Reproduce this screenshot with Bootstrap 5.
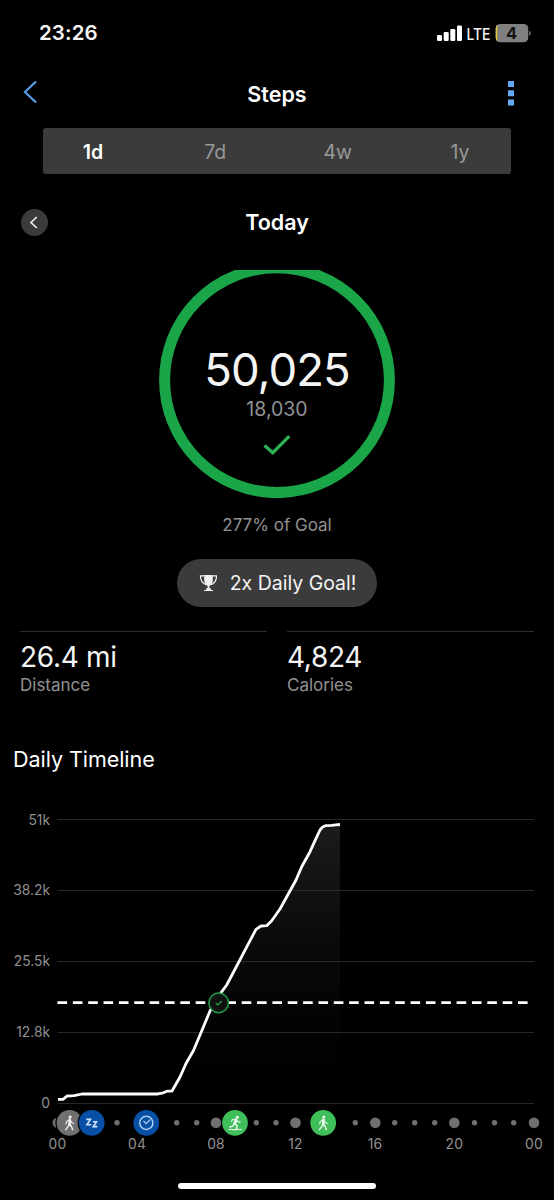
<!DOCTYPE html>
<html lang="en" data-bs-theme="dark">
<head>
<meta charset="utf-8">
<meta name="viewport" content="width=device-width, initial-scale=1">
<title>Steps</title>
<link href="https://cdn.jsdelivr.net/npm/bootstrap@5.3.0/dist/css/bootstrap.min.css" rel="stylesheet">
<style>
  body { background: #000; color: #f4f4f4; font-family: Inter, "Liberation Sans", sans-serif; overflow: hidden; }
  .screen { width: 554px; height: 1200px; }
  svg { display: block; flex: none; }
  .muted { color: #929292; }
  .statusbar { height: 66px; padding: 0 22px 0 39px; }
  .clock { font-size: 20.5px; font-weight: 600; letter-spacing: .1px; padding-top: 1px; }
  .topbar { height: 62px; padding: 0 40px 6px 23px; }
  .topbar .back { margin-top: -4px; }
  .heading { font-size: 21.5px; font-weight: 600; line-height: 28px; }
  .side { width: 45px; }
  .side.end { width: 28px; }
  .segments { height: 46px; margin: 0 43px; padding: 3px 21px 0 20px; background: #3b3b3b; border-radius: 3px; }
  .segments .btn { width: 60px; padding: 0; border: 0; font-size: 19.5px; color: #989898; }
  .segments .btn.active { color: #fff; font-weight: 600; background: none; }
  .dayrow { height: 96px; padding: 0 48px 0 21px; }
  .round-btn { width: 27px; height: 27px; background: #3b3b3b; }
  .ring-wrap { height: 228px; }
  .ring-text { inset: 0; padding-top: 73px; }
  .total { font-size: 45.5px; line-height: 53px; font-weight: 400; letter-spacing: -.95px; }
  .target { font-size: 19.5px; line-height: 26px; letter-spacing: 0; }
  .percent { font-size: 17px; height: 61px; line-height: 55px; }
  .pill { width: 200px; height: 48px; background: #3b3b3b; font-size: 19.5px; gap: 13px; padding: 2px 0 0 1px; }
  .stats { padding: 0 20px; margin-top: 24px; gap: 20px; height: 100px; }
  .stat { border-top: 1px solid #2c2c2c; padding-top: 9px; }
  .stat-value { font-size: 28px; line-height: 33px; letter-spacing: -.3px; }
  .stat-label { font-size: 17px; line-height: 22px; }
  .section-title { font-size: 21.5px; line-height: 28px; margin: 14px 0 0 13px; height: 45px; font-weight: 400; letter-spacing: -.05px; }
  .chart text { fill: #929292; font-size: 13.8px; }
  .home { width: 198px; height: 6px; background: #fff; margin-top: 13px; }
</style>
</head>
<body>
<main class="screen d-flex flex-column">
  <div class="statusbar d-flex align-items-center justify-content-between">
    <span class="clock">23:26</span>
    <svg width="96" height="24" viewBox="436 21 96 24">
      <g fill="#fff">
        <rect x="437" y="35" width="5" height="6" rx="1.2"/>
        <rect x="443.7" y="32" width="5" height="9" rx="1.2"/>
        <rect x="450.3" y="29" width="5" height="12" rx="1.2"/>
        <rect x="457" y="25.500" width="5" height="15.500" rx="1.2"/>
      </g>
      <text x="466.500" y="40" font-size="16" font-weight="500" fill="#f4f4f4" textLength="24" lengthAdjust="spacingAndGlyphs">LTE</text>
      <clipPath id="cell"><rect x="495.700" y="24" width="32.500" height="18.300" rx="4.500"/></clipPath>
      <g clip-path="url(#cell)"><rect x="495" y="24" width="34" height="19" fill="#808080"/><rect x="495" y="24" width="2.300" height="19" fill="#e2c634"/></g>
      <path d="M529.200 30.500a3.300 3.300 0 0 1 0 5.500z" fill="#808080"/>
      <text x="511.500" y="39.300" font-size="16.500" font-weight="700" text-anchor="middle" fill="#111">4</text>
    </svg>
  </div>

  <header class="topbar d-flex align-items-center justify-content-between">
    <div class="side back"><svg width="16" height="26" viewBox="23 79 16 26"><path d="M36 81.500 25 92l11 10.500" fill="none" stroke="#559fe8" stroke-width="2.200"/></svg></div>
    <h1 class="heading mb-0">Steps</h1>
    <div class="side end d-flex justify-content-end"><svg width="6" height="26" viewBox="508 81 6 26"><path d="M508 81h6v6h-6zM508 90.200h6v6h-6zM508 99.500h6v6h-6z" fill="#62a8f2"/></svg></div>
  </header>

  <div class="segments d-flex align-items-center justify-content-between">
    <button class="btn active">1d</button><button class="btn">7d</button><button class="btn">4w</button><button class="btn">1y</button>
  </div>

  <div class="dayrow d-flex align-items-center justify-content-between">
    <div class="round-btn rounded-circle d-flex align-items-center justify-content-center">
      <svg width="27" height="27" viewBox="0 0 27 27"><path d="M15.800 8 10 13.500l5.800 5.500" fill="none" stroke="#f2f2f2" stroke-width="1.600"/></svg>
    </div>
    <h2 class="heading mb-0">Today</h2>
    <span></span>
  </div>

  <div class="ring-wrap position-relative">
    <svg width="554" height="228" viewBox="0 270 554 228"><path d="M0 270.500h554V499H0z" fill="none"/><circle cx="277" cy="380.200" r="112.400" fill="none" stroke="#19a548" stroke-width="11"/></svg>
    <div class="ring-text position-absolute d-flex flex-column align-items-center">
      <div class="total">50,025</div>
      <div class="target muted">18,030</div>
      <svg class="mt-2" width="28" height="34" viewBox="263 430 28 34"><path d="m264.500 445.500 8.300 7.200 16.500-16.500" fill="none" stroke="#2cb253" stroke-width="3.300"/></svg>
    </div>
  </div>
  <div class="percent muted text-center">277% of Goal</div>

  <div class="pill rounded-pill d-flex align-items-center justify-content-center align-self-center">
    <svg width="18" height="18" viewBox="-.5 1 18 18">
      <path d="M4.700 1h8.600v5c0 3-1.500 5-3.400 6v2.300h1.500V16H6.600v-1.700h1.500V12C6.200 11 4.700 9 4.700 6z" fill="#f2f2f2"/>
      <path d="M5 1.800H.9c.1 4.500 1.800 7.500 5.800 9M13 1.800h4.100c-.1 4.500-1.800 7.500-5.800 9M4.500 16.500h9" fill="none" stroke="#f2f2f2" stroke-width="1.200"/>
    </svg>
    <span>2x Daily Goal!</span>
  </div>

  <div class="stats d-flex">
    <div class="stat flex-fill w-50"><div class="stat-value">26.4 mi</div><div class="stat-label muted">Distance</div></div>
    <div class="stat flex-fill w-50"><div class="stat-value">4,824</div><div class="stat-label muted">Calories</div></div>
  </div>

  <h3 class="section-title mb-0">Daily Timeline</h3>

  <svg class="chart" width="554" height="380" viewBox="0 790 554 380">
    <defs><linearGradient id="fade" x1="0" y1="0" x2="0" y2="1"><stop offset="0" stop-color="#1b1b1b"/><stop offset=".4" stop-color="#0b0b0b"/><stop offset=".75" stop-color="#020202"/><stop offset="1" stop-color="#000"/></linearGradient></defs>
    <path d="M58 1099.300h5l4-3.300 7-.3 8-1.700h75l5-.8 5-2 5-.2 8-14 6-13.500 7.500-13L200 1035l10-24 11-18.300 5.700-7.700 29.300-55.700 5-3.300 5.700-.3 5-5 5.300-7.400 3-4.300 16-29 5.700-13.300 8.300-15 5-11 5-10.700 2.300-2.700 3-1.600 6.400-.3 4.300-.6 4-.3V1103H58z" fill="url(#fade)"/>
    <path d="M57.500 819.500H534M57.500 890.500H534M57.500 961.500H534M57.500 1032.500H534M57.500 1103.500H534" stroke="#282828"/>
    <path d="M57.500 1002.700H529" stroke="#fff" stroke-width="2.800" stroke-dasharray="9.600 5.750"/>
    <path d="M58 1099.300h5l4-3.300 7-.3 8-1.700h75l5-.8 5-2 5-.2 8-14 6-13.500 7.500-13L200 1035l10-24 11-18.300 5.700-7.700 29.300-55.700 5-3.300 5.700-.3 5-5 5.300-7.400 3-4.300 16-29 5.700-13.300 8.300-15 5-11 5-10.700 2.300-2.700 3-1.600 6.400-.3 4.300-.6 4-.3" fill="none" stroke="#fff" stroke-width="2.800" stroke-linejoin="round"/>
    <circle cx="218.700" cy="1002.900" r="9.800" fill="#101210" stroke="#239c49" stroke-width="1.500"/>
    <path d="m215.700 1003 2.100 2 3.800-4" fill="none" stroke="#25a54d" stroke-width="1.200"/>
    <g text-anchor="end">
      <text x="50" y="824.500">51k</text><text x="50" y="895.400">38.2k</text><text x="50" y="966.400">25.5k</text><text x="50" y="1037.400">12.8k</text><text x="50" y="1108.400">0</text>
    </g>
    <g fill="#707070">
      <circle cx="57.800" cy="1122.800" r="5.300"/><circle cx="216" cy="1122.800" r="5.300"/><circle cx="295.500" cy="1122.800" r="5.300"/><circle cx="375.300" cy="1122.800" r="5.300"/><circle cx="454.300" cy="1122.800" r="5.300"/><circle cx="534" cy="1122.800" r="5.300"/>
      <circle cx="117" cy="1122.800" r="2.700"/><circle cx="176.700" cy="1122.800" r="2.700"/><circle cx="196.700" cy="1122.800" r="2.700"/><circle cx="256.300" cy="1122.800" r="2.700"/><circle cx="276" cy="1122.800" r="2.700"/><circle cx="355.300" cy="1122.800" r="2.700"/><circle cx="394.700" cy="1122.800" r="2.700"/><circle cx="414.700" cy="1122.800" r="2.700"/><circle cx="434.700" cy="1122.800" r="2.700"/><circle cx="474.500" cy="1122.800" r="2.700"/><circle cx="494.500" cy="1122.800" r="2.700"/><circle cx="513.700" cy="1122.800" r="2.700"/>
    </g>
    <g stroke="#000" stroke-width="1.200">
      <circle cx="69.500" cy="1122.800" r="13.500" fill="#707070"/><circle cx="91.700" cy="1122.800" r="13.500" fill="#0850a5"/><circle cx="146.300" cy="1122.800" r="13.500" fill="#0850a5"/><circle cx="235" cy="1122.800" r="13.500" fill="#3fbf5a"/><circle cx="323.200" cy="1122.800" r="13.500" fill="#3fbf5a"/>
    </g>
    <defs>
      <g id="walker" fill="none" stroke="#f1f5f1" stroke-linecap="round" stroke-linejoin="round">
        <circle cx=".8" cy="-5.800" r="1.500" fill="#f1f5f1" stroke="none"/>
        <path d="M.5-3 .2 1.200" stroke-width="2.600"/>
        <path d="M0-3-2.900-1.200l-.4 2.400M1-2.600 2.400-.3l2 .9" stroke-width="1.100"/>
        <path d="M0 1.300-1.200 3.800l-2.400 3M.6 1.300 2.200 3.700l1.200 3.200" stroke-width="1.400"/>
      </g>
    </defs>
    <use href="#walker" x="69.300" y="1122.800"/>
    <use href="#walker" x="323" y="1122.800"/>
    <path d="M86.300 1119.400h4.200l-3.600 5.400h4.300M92.800 1121.800h3.700l-3.200 4.800h4" fill="none" stroke="#d4e4f8" stroke-width="1.600"/>
    <g fill="none" stroke="#a9cdf5"><circle cx="146.300" cy="1122.900" r="6.600" stroke-width="1.500"/><path d="m143.500 1121 2.600 2.600 4-3.800" stroke-width="1.200"/></g>
    <g fill="none" stroke="#f1f8f1" stroke-linecap="round" stroke-linejoin="round">
      <circle cx="237.400" cy="1117.200" r="1.500" fill="#f1f8f1" stroke="none"/>
      <path d="m236 1119.700-1.300 3.600" stroke-width="2.600"/>
      <path d="m235.500 1119.200-3 .3-1 2M236.800 1120.500l1.500 1.600 2-.3" stroke-width="1.100"/>
      <path d="m234.300 1123.700-1.500 2.500-2.800.8M235.300 1123.700l1.800 1.900-.7 3" stroke-width="1.400"/>
      <path d="M228.800 1129.700c2-1.300 3.500.4 5.500.1s3.500-.8 7.200-.3" stroke-width="1.100"/>
    </g>
    <g text-anchor="middle" letter-spacing=".2">
      <text x="57.500" y="1149">00</text><text x="137" y="1149">04</text><text x="216" y="1149">08</text><text x="295.500" y="1149">12</text><text x="375" y="1149">16</text><text x="454.300" y="1149">20</text><text x="534" y="1149">00</text>
    </g>
  </svg>
  <div class="home rounded-pill align-self-center"></div>
</main>
<script src="https://cdn.jsdelivr.net/npm/bootstrap@5.3.0/dist/js/bootstrap.bundle.min.js"></script>
</body>
</html>
